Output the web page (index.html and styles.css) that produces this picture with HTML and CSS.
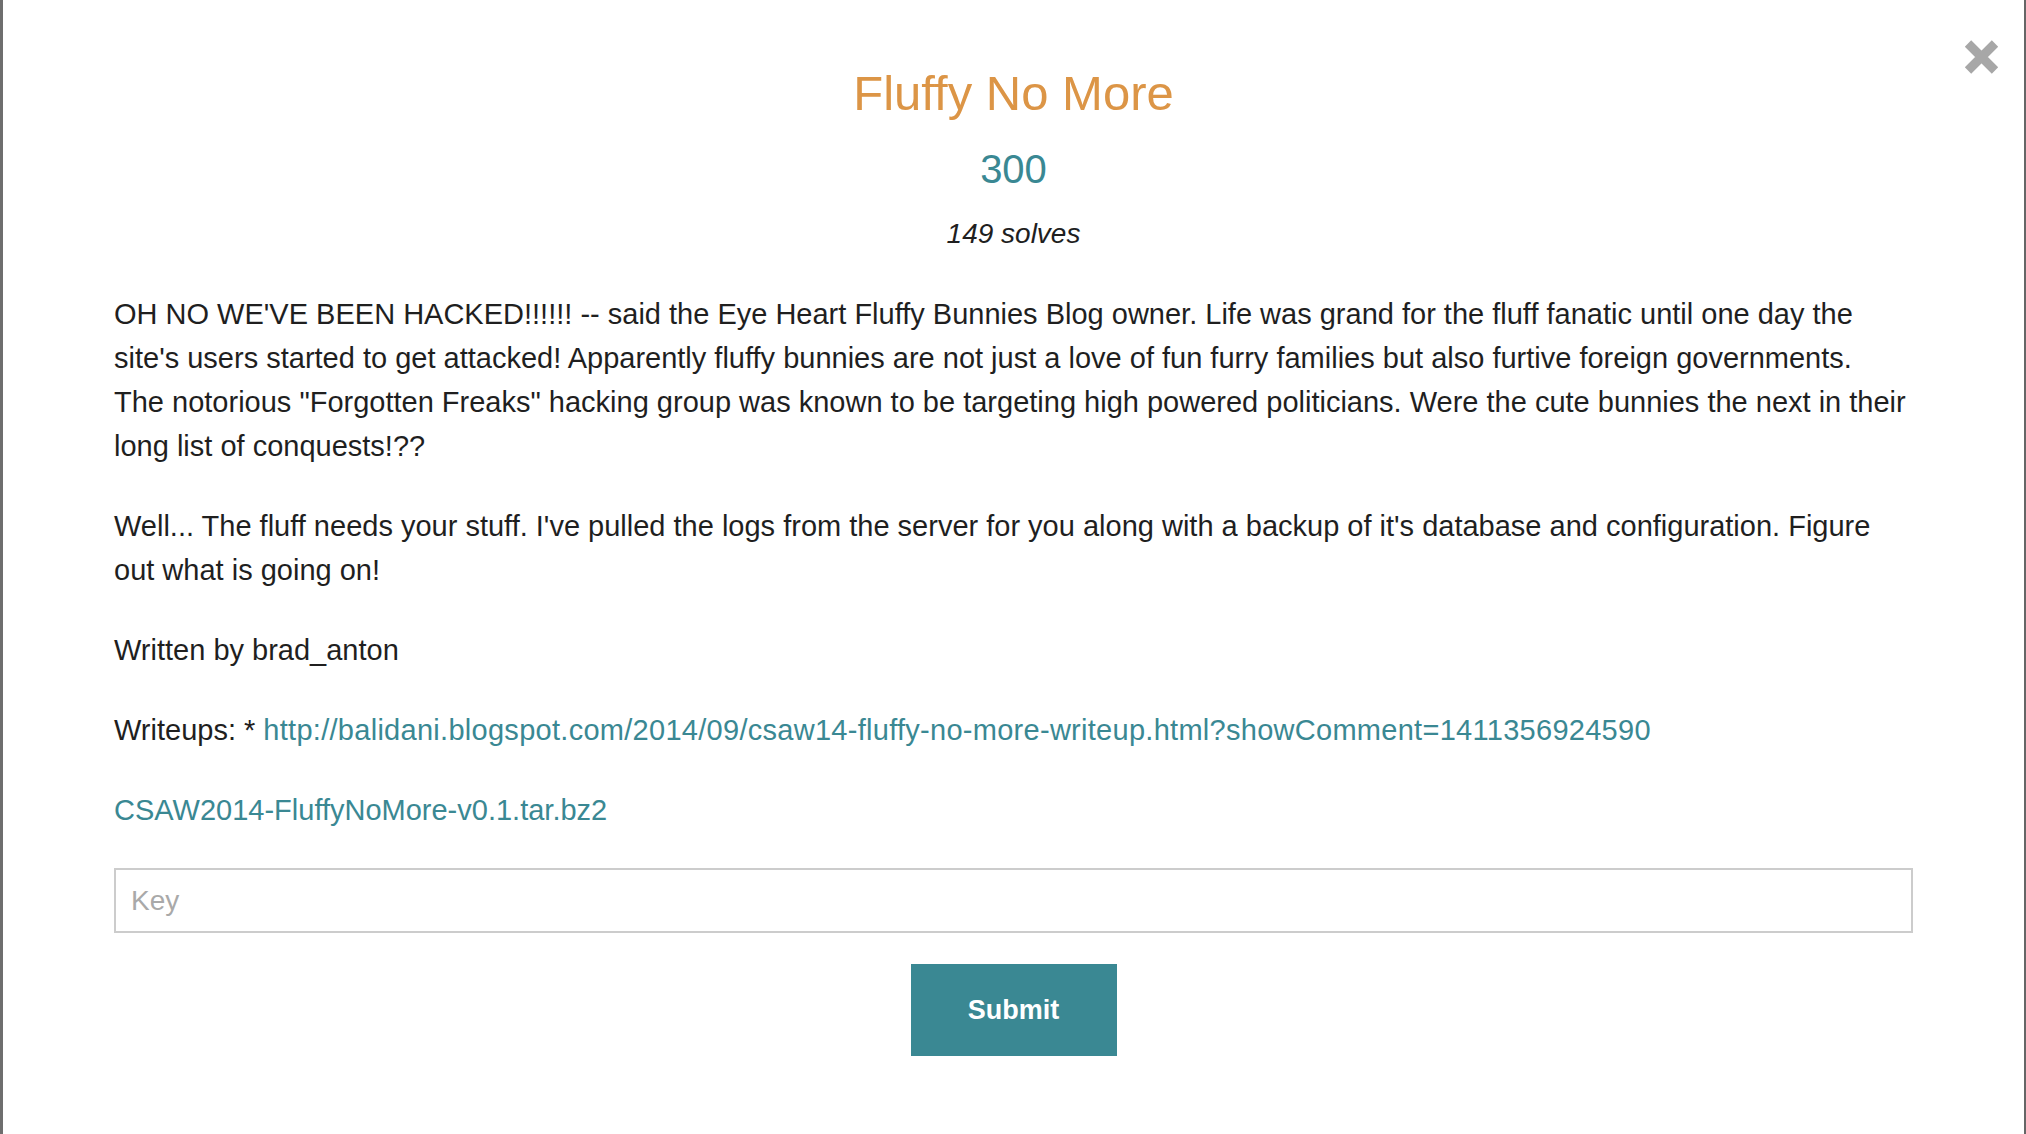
FILE: index.html
```html
<!DOCTYPE html>
<html lang="en">
<head>
<meta charset="utf-8">
<title>Fluffy No More</title>
<link rel="stylesheet" href="styles.css">
</head>
<body>
<div class="modal">
  <button class="close" type="button" aria-label="Close">
    <svg width="35" height="34" viewBox="0 0 35 34"><path d="M4 3.5 L31 30.5 M31 3.5 L4 30.5" stroke="#a7a7a7" stroke-width="9" fill="none"/></svg>
  </button>
  <h1 class="title">Fluffy No More</h1>
  <div class="points">300</div>
  <div class="solves">149 solves</div>
  <div class="desc">
    <p>OH NO WE'VE BEEN HACKED!!!!!! -- said the Eye Heart Fluffy Bunnies Blog owner. Life was grand for the fluff fanatic until one day the<br>site's users started to get attacked! Apparently fluffy bunnies are not just a love of fun furry families but also furtive foreign governments.<br>The notorious "Forgotten Freaks" hacking group was known to be targeting high powered politicians. Were the cute bunnies the next in their<br>long list of conquests!??</p>
    <p>Well... The fluff needs your stuff. I've pulled the logs from the server for you along with a backup of it's database and configuration. Figure out what is going on!</p>
    <p>Written by brad_anton</p>
    <p>Writeups: * <a class="writeup" href="#">http://balidani.blogspot.com/2014/09/csaw14-fluffy-no-more-writeup.html?showComment=1411356924590</a></p>
    <p><a href="#">CSAW2014-FluffyNoMore-v0.1.tar.bz2</a></p>
  </div>
  <form class="key-form">
    <input class="key-input" type="text" placeholder="Key">
    <button class="submit" type="button">Submit</button>
  </form>
</div>
</body>
</html>
```

FILE: styles.css
```css
html, body {
  margin: 0;
  padding: 0;
  background: #ffffff;
}

body {
  border-left: 3px solid #6e6e6e;
  border-right: 2px solid #666666;
  min-height: 1134px;
  box-sizing: border-box;
  font-family: "Liberation Sans", Arial, Helvetica, sans-serif;
  color: #1f1f1f;
}

.modal {
  position: relative;
  padding: 63px 111px 0 111px;
}

.close {
  position: absolute;
  top: 40px;
  right: 25px;
  width: 35px;
  height: 34px;
  padding: 0;
  margin: 0;
  border: 0;
  background: transparent;
  line-height: 0;
}

.title {
  margin: 0;
  text-align: center;
  font-size: 49px;
  font-weight: normal;
  line-height: 60px;
  color: #dc9546;
}

.points {
  margin-top: 22px;
  text-align: center;
  font-size: 40px;
  line-height: 48px;
  color: #3a8893;
}

.solves {
  margin-top: 21px;
  text-align: center;
  font-size: 28px;
  font-style: italic;
  line-height: 40px;
  color: #1f1f1f;
}

.desc {
  margin-top: 38px;
  font-size: 29px;
  line-height: 44px;
}

.desc p {
  margin: 0 0 36px 0;
}

.desc p:last-child {
  margin-bottom: 0;
}

.desc a {
  color: #3a8893;
  text-decoration: none;
}

.desc .writeup {
  letter-spacing: 0.28px;
}

.key-form {
  margin: 36px 0 0 0;
  display: flex;
  flex-direction: column;
  align-items: center;
}

.key-input {
  box-sizing: border-box;
  width: 100%;
  height: 65px;
  border: 2px solid #cccccc;
  padding: 0 15px;
  font-family: "Liberation Sans", Arial, Helvetica, sans-serif;
  font-size: 28px;
  color: #1f1f1f;
  outline: none;
}

.key-input::placeholder {
  color: #a9a9a9;
}

.submit {
  margin-top: 31px;
  width: 206px;
  height: 92px;
  border: 0;
  background: #3a8893;
  color: #ffffff;
  font-family: "Liberation Sans", Arial, Helvetica, sans-serif;
  font-size: 27px;
  font-weight: bold;
}
```
